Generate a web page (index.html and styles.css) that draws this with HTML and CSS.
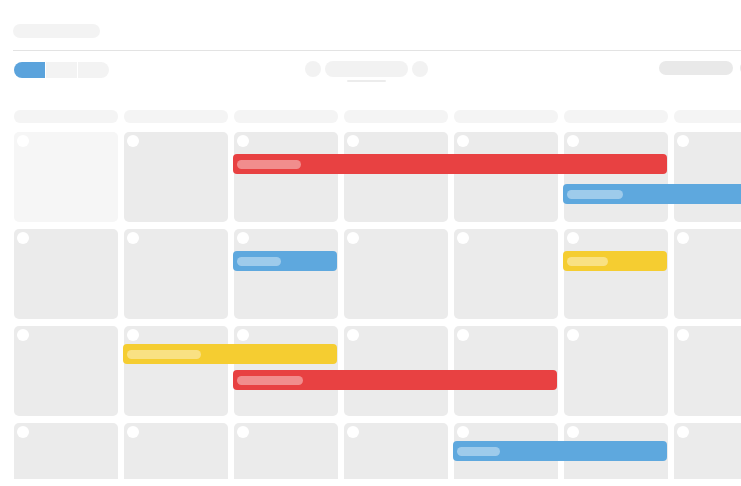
FILE: index.html
```html
<!DOCTYPE html>
<html>
<head>
	<title>日历</title>
	<meta http-equiv="Content-Type" content="text/html;charset=utf-8">
	<link rel="stylesheet" href="styles.css">
</head>
<body>
	<div id="app">
		<div class="topbar">
			<div class="title"></div>
		</div>
		<div class="divider"></div>

		<div class="toolbar">
			<ul class="views">
				<li class="current"></li>
				<li></li>
				<li></li>
			</ul>
			<div class="nav">
				<div class="nav-row">
					<span class="arrow"></span>
					<span class="month"></span>
					<span class="arrow"></span>
				</div>
				<div class="nav-line"></div>
			</div>
			<div class="actions">
				<span class="btn"></span>
				<span class="btn"></span>
			</div>
		</div>

		<div class="calendar">
			<div class="weekdays">
				<span></span><span></span><span></span><span></span><span></span><span></span><span></span>
			</div>

			<div class="weeks">
				<!-- 第一周 -->
				<div class="week">
					<div class="day other"><i></i></div>
					<div class="day"><i></i></div>
					<div class="day"><i></i></div>
					<div class="day"><i></i></div>
					<div class="day"><i></i></div>
					<div class="day"><i></i></div>
					<div class="day"><i></i></div>
					<div class="events">
						<div class="event red" style="grid-column:3 / 7"><b style="width:64px"></b></div>
						<div class="event blue" style="grid-column:6 / 8"><b style="width:56px"></b></div>
					</div>
				</div>

				<!-- 第二周 -->
				<div class="week">
					<div class="day"><i></i></div>
					<div class="day"><i></i></div>
					<div class="day"><i></i></div>
					<div class="day"><i></i></div>
					<div class="day"><i></i></div>
					<div class="day"><i></i></div>
					<div class="day"><i></i></div>
					<div class="events">
						<div class="event blue" style="grid-column:3 / 4"><b style="width:44px"></b></div>
						<div class="event yellow" style="grid-column:6 / 7"><b style="width:41px"></b></div>
					</div>
				</div>

				<!-- 第三周 -->
				<div class="week">
					<div class="day"><i></i></div>
					<div class="day"><i></i></div>
					<div class="day"><i></i></div>
					<div class="day"><i></i></div>
					<div class="day"><i></i></div>
					<div class="day"><i></i></div>
					<div class="day"><i></i></div>
					<div class="events tight">
						<div class="event yellow" style="grid-column:2 / 4"><b style="width:74px"></b></div>
						<div class="event red" style="grid-column:3 / 6"><b style="width:66px"></b></div>
					</div>
				</div>

				<!-- 第四周 -->
				<div class="week">
					<div class="day"><i></i></div>
					<div class="day"><i></i></div>
					<div class="day"><i></i></div>
					<div class="day"><i></i></div>
					<div class="day"><i></i></div>
					<div class="day"><i></i></div>
					<div class="day"><i></i></div>
					<div class="events tight">
						<div class="event blue" style="grid-column:5 / 7"><b style="width:43px"></b></div>
					</div>
				</div>
			</div>
		</div>
	</div>
</body>
</html>
```

FILE: styles.css
```css
html,body{margin:0;padding:0;background:#fff;overflow:hidden}
#app{width:741px;height:486px;overflow:hidden}

/* 顶部标题 */
.topbar{padding:24px 0 0 13px}
.topbar .title{width:87px;height:14px;border-radius:7px;background:#f3f3f3}
.divider{margin:12px 0 0 13px;height:1px;background:#e3e3e3}

/* 工具栏 */
.toolbar{display:flex;align-items:flex-start;margin-top:10px;padding-left:14px;width:900px}
.views{list-style:none;margin:1px 0 0;padding:0;display:flex;gap:1px}
.views li{width:31px;height:16px;background:#f3f3f3}
.views li:first-child{border-radius:8px 0 0 8px}
.views li:last-child{border-radius:0 8px 8px 0}
.views .current{background:#5ba3dc}
.nav{margin-left:196px;display:flex;flex-direction:column;align-items:center}
.nav-row{display:flex;gap:4px}
.nav .arrow{width:16px;height:16px;border-radius:50%;background:#f2f2f2}
.nav .month{width:83px;height:16px;border-radius:8px;background:#f2f2f2}
.nav-line{margin-top:3px;width:39px;height:2px;border-radius:1px;background:#ececec}
.actions{margin-left:231px;display:flex;gap:7px}
.actions .btn{width:74px;height:14px;border-radius:7px;background:#e9e9e9}
.actions .btn + .btn{width:60px}

/* 日历 */
.calendar{margin-top:28px;padding-left:14px}
.weekdays,.week,.events{display:grid;grid-template-columns:repeat(7,104px);column-gap:6px}
.weekdays span{height:13px;border-radius:6px;background:#f4f4f4}
.weeks{margin-top:9px;height:347px;overflow:hidden;display:flex;flex-direction:column;gap:7px}
.week{grid-template-rows:90px;flex:none}
.day{grid-row:1;background:#ebebeb;border-radius:5px;padding:3px}
.day:nth-child(1){grid-column:1}
.day:nth-child(2){grid-column:2}
.day:nth-child(3){grid-column:3}
.day:nth-child(4){grid-column:4}
.day:nth-child(5){grid-column:5}
.day:nth-child(6){grid-column:6}
.day:nth-child(7){grid-column:7}
.day.other{background:#f6f6f6}
.day i{display:block;width:12px;height:12px;border-radius:50%;background:#fff}

.events{grid-row:1;grid-column:1 / -1;align-content:start;grid-auto-rows:20px;row-gap:10px;padding-top:22px}
.events.tight{padding-top:18px;row-gap:6px}
.event{margin:0 1px 0 -1px;border-radius:4px;display:flex;align-items:center;padding-left:4px}
.event b{display:block;height:9px;border-radius:5px;background:rgba(255,255,255,.4)}
.event.red{background:#e84142}
.event.blue{background:#5ea8de}
.event.yellow{background:#f5cd31}
```
